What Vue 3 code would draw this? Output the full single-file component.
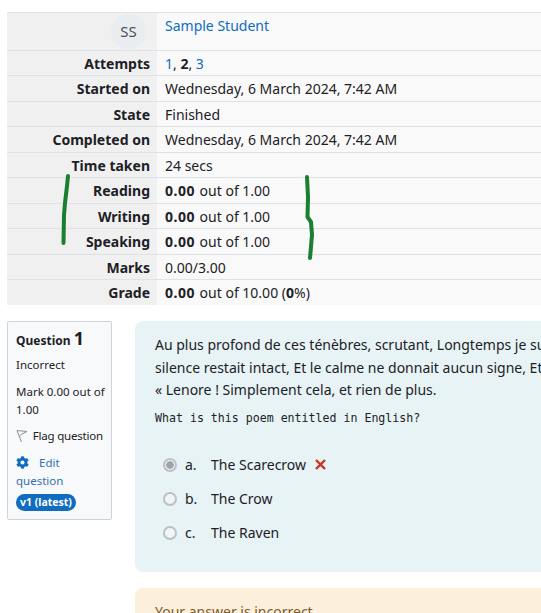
<template>
  <div class="page">
    <div class="summary">
      <div class="row user-row">
        <div class="label"><span class="avatar">SS</span></div>
        <div class="value"><a class="link">Sample Student</a></div>
      </div>
      <div v-for="row in rows" :key="row.label" class="row">
        <div class="label">{{ row.label }}</div>
        <div class="value">
          <template v-if="row.attempts"><a class="link">1</a>, <b>2</b>, <a class="link">3</a></template>
          <template v-else-if="row.grade"><b class="score">0.00</b> out of 10.00 (<b>0</b>%)</template>
          <template v-else-if="row.mark"><b class="score">0.00</b> out of 1.00</template>
          <template v-else>{{ row.text }}</template>
        </div>
      </div>
    </div>

    <div class="question">
      <div class="info">
        <h3 class="qno">Question <span class="num">1</span></h3>
        <div class="state">Incorrect</div>
        <div class="grade">Mark 0.00 out of 1.00</div>
        <div class="flag">
          <svg class="flag-icon" viewBox="0 0 12 14" width="12" height="14">
            <path d="M1 1.5 L5.5 13 M1 1.5 L11 2.5 L5 5.5 L3.4 7.5" fill="none" stroke="#8b8f94" stroke-width="1" />
          </svg>
          Flag question
        </div>
        <div class="edit">
          <svg class="cog" viewBox="0 0 512 512" width="13" height="13">
            <path fill="#0f6cbf" d="M487 316l-42-25a190 190 0 0 0 0-70l42-25c5-3 7-8 5-14a249 249 0 0 0-54-93c-4-4-10-5-15-2l-42 24a190 190 0 0 0-61-35V28c0-6-4-11-9-12a251 251 0 0 0-108 0c-6 1-10 6-10 12v48a190 190 0 0 0-60 35L91 87c-5-3-11-2-15 2a248 248 0 0 0-54 93c-2 6 0 11 5 14l42 25a190 190 0 0 0 0 70l-42 25c-5 3-7 8-5 14 11 35 30 66 54 93 4 4 10 5 15 2l42-24a190 190 0 0 0 60 35v48c0 6 4 11 10 12a251 251 0 0 0 108 0c5-1 9-6 9-12v-48a190 190 0 0 0 61-35l42 24c5 3 11 2 15-2a248 248 0 0 0 54-93c2-6 0-11-5-14zM256 336a80 80 0 1 1 0-160 80 80 0 0 1 0 160z" />
          </svg>
          <a class="edit-link">Edit question</a>
        </div>
        <span class="badge">v1 (latest)</span>
      </div>

      <div class="content">
        <div class="formulation">
          <p class="poem">Au plus profond de ces ténèbres, scrutant, Longtemps je suis resté, Plein d'effroi, de doutes, rêvant Ce que nul mortel n'osa rêver ; Mais le<br />silence restait intact, Et le calme ne donnait aucun signe, Et le seul mot qui fut prononcé fut le mot murmuré,<br />« Lenore ! Simplement cela, et rien de plus.</p>
          <div class="prompt">What is this poem entitled in English?</div>
          <div class="answers">
            <div v-for="a in answers" :key="a.key" class="answer">
              <span class="radio" :class="{ checked: a.checked }"></span>
              <span class="key">{{ a.key }}.</span>
              <span>{{ a.text }}</span>
              <svg v-if="a.checked" class="cross" viewBox="0 0 11 11" width="11" height="11">
                <path d="M1 1 L10 10 M10 1 L1 10" stroke="#ca3120" stroke-width="2.4" fill="none" />
              </svg>
            </div>
          </div>
        </div>
        <div class="feedback">Your answer is incorrect.</div>
      </div>
    </div>

    <!-- pen marks drawn over the screenshot -->
    <svg class="marks" width="541" height="613" viewBox="0 0 541 613">
      <path d="M68 176 L67 186 L65 203 L64 215 L63.5 243" />
      <path d="M307 177 L308 197 L307.5 217 L311 222 L312 235 L310 258" />
    </svg>
  </div>
</template>

<script setup>
const rows = [
  { label: 'Attempts', attempts: true },
  { label: 'Started on', text: 'Wednesday, 6 March 2024, 7:42 AM' },
  { label: 'State', text: 'Finished' },
  { label: 'Completed on', text: 'Wednesday, 6 March 2024, 7:42 AM' },
  { label: 'Time taken', text: '24 secs' },
  { label: 'Reading', mark: true },
  { label: 'Writing', mark: true },
  { label: 'Speaking', mark: true },
  { label: 'Marks', text: '0.00/3.00' },
  { label: 'Grade', grade: true },
]

const answers = [
  { key: 'a', text: 'The Scarecrow', checked: true },
  { key: 'b', text: 'The Crow' },
  { key: 'c', text: 'The Raven' },
]
</script>

<style>
html, body {
  margin: 0;
  background: #fff;
  overflow: hidden;
}
</style>

<style scoped>
.page {
  position: relative;
  height: 613px;
  overflow: hidden;
  padding: 12px 0 0 7px;
  box-sizing: border-box;
  font-family: "Noto Sans", "Open Sans", sans-serif;
  font-size: 14px;
  color: #1d2125;
}

.summary {
  width: 534px;
  border-top: 1px solid #dee2e6;
}

.row {
  display: grid;
  grid-template-columns: 150px 1fr;
  height: 26px;
  box-sizing: border-box;
  border-bottom: 1px solid #dee2e6;
  line-height: 22px;
}

/* the source rows are 25.5px tall, so they alternate once snapped to pixels */
.row:nth-child(even) {
  height: 25px;
}

.row:last-child {
  height: 25px;
  border-bottom: none;
}

.row.user-row {
  height: 38px;
}

.label {
  background: #f0f0f1;
  font-weight: 700;
  text-align: right;
  padding-right: 7px;
  padding-top: 2px;
}

.value {
  background: #f9f9fa;
  padding-left: 8px;
  padding-top: 2px;
  white-space: nowrap;
}

.user-row .label {
  padding-top: 1px;
}

.score {
  letter-spacing: 0.5px;
  margin-right: 1px;
}

.link {
  color: #0f6cbf;
}

.avatar {
  display: block;
  width: 35px;
  height: 35px;
  margin-left: auto;
  margin-right: 4px;
  border-radius: 50%;
  background: #e9edf0;
  color: #495057;
  font-size: 15px;
  font-weight: 400;
  text-align: center;
  line-height: 35px;
}

.question {
  display: flex;
  align-items: flex-start;
  gap: 23px;
  margin-top: 16px;
}

.info {
  flex: none;
  width: 105px;
  height: 199px;
  box-sizing: border-box;
  padding: 5px 6px 8px 8px;
  background: #f8f9fa;
  border: 1px solid #ced4da;
  border-radius: 2px;
  font-size: 11.5px;
  line-height: 18px;
}

.qno {
  margin: 0 0 4px;
  font-size: 12px;
  font-weight: 700;
  line-height: 22px;
}

.num {
  font-size: 18px;
}

.state {
  margin-bottom: 9px;
}

.grade {
  margin-bottom: 8px;
}

.flag {
  margin-bottom: 9px;
  white-space: nowrap;
  letter-spacing: -0.2px;
}

.flag-icon {
  vertical-align: -3px;
  margin-right: 2px;
}

.edit-link {
  color: #2f6fb5;
}

.cog {
  vertical-align: -2px;
  margin-right: 10px;
}

.badge {
  display: block;
  width: fit-content;
  margin-top: 4px;
  padding: 0 4px;
  border-radius: 9px;
  background: #0f6cbf;
  color: #fff;
  font-weight: 700;
  font-size: 10.5px;
  line-height: 17px;
  white-space: nowrap;
}

.content {
  flex: none;
  width: 500px;
}

.formulation {
  height: 251px;
  box-sizing: border-box;
  padding: 13px 20px;
  background: #e7f3f5;
  border-radius: 8px;
}

.poem {
  margin: 0;
  line-height: 22.5px;
  white-space: nowrap;
}

.prompt {
  margin-top: 7px;
  font-family: "DejaVu Sans Mono", monospace;
  font-size: 11.6px;
  line-height: 18px;
}

.answers {
  margin-top: 21px;
}

.answer {
  display: flex;
  align-items: center;
  height: 34px;
  padding-left: 8px;
}

.radio {
  flex: none;
  box-sizing: border-box;
  width: 14px;
  height: 14px;
  border: 2px solid #bcc1c6;
  border-radius: 50%;
  background: #f2f5f7;
  margin-right: 8px;
}

.radio.checked {
  background: radial-gradient(circle, #a0a4aa 0 3.5px, #eef0f2 4px);
}

.key {
  width: 26px;
}

.cross {
  margin-left: 9px;
}

.feedback {
  margin-top: 16px;
  height: 60px;
  padding: 14px 20px;
  box-sizing: border-box;
  background: #fcefdc;
  border-radius: 8px;
  color: #7d5a29;
}

.marks {
  position: absolute;
  left: 0;
  top: 0;
  pointer-events: none;
}

.marks path {
  fill: none;
  stroke: #1a7f2e;
  stroke-width: 4;
  stroke-linecap: round;
  stroke-linejoin: round;
}
</style>
